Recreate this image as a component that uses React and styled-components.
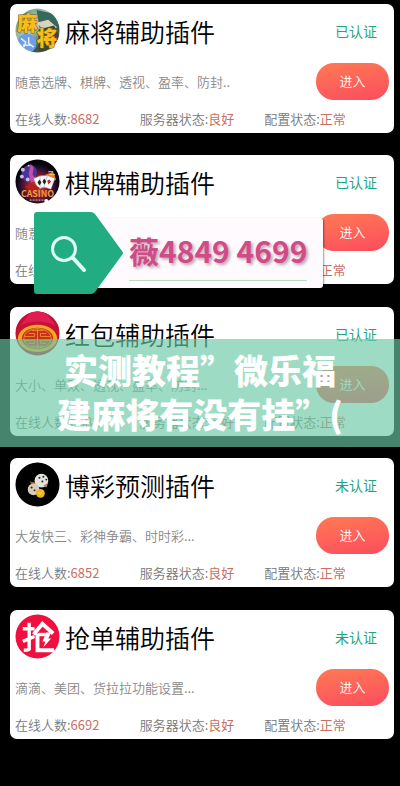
import React from 'react';
import styled, { createGlobalStyle } from 'styled-components';

const plugins = [
	{ name: '麻将辅助插件', icon: 'mahjong', verified: true, desc: '随意选牌、棋牌、透视、盈率、防封..', online: '8682' },
	{ name: '棋牌辅助插件', icon: 'casino', verified: true, desc: '随意选牌、棋牌、透视、盈率、防封..', online: '8682' },
	{ name: '红包辅助插件', icon: 'packet', verified: true, desc: '大小、单双、透视、盈率、防封...', online: '8682' },
	{ name: '博彩预测插件', icon: 'dice', verified: false, desc: '大发快三、彩神争霸、时时彩...', online: '6852' },
	{ name: '抢单辅助插件', icon: 'grab', verified: false, desc: '滴滴、美团、货拉拉功能设置...', online: '6692' },
];

function MahjongIcon(){
	return(
		<Icon viewBox="0 0 46 46" aria-hidden="true">
			<defs>
				<linearGradient id="sky" x1="0" y1="0" x2="1" y2="1">
					<stop offset="0" stopColor="#4d8c7e"/>
					<stop offset="0.45" stopColor="#b9c9b4"/>
					<stop offset="0.7" stopColor="#31594e"/>
					<stop offset="1" stopColor="#6f8b7c"/>
				</linearGradient>
				<clipPath id="mahjongClip"><circle cx="23" cy="23" r="22.5"/></clipPath>
			</defs>
			<g clipPath="url(#mahjongClip)">
				<rect width="46" height="46" fill="url(#sky)"/>
				<path d="M22 2 L40 6 L46 20 L35 15 L25 20 Z" fill="#36695c"/>
				<path d="M22 15 L34 12 L43 20 L30 23 Z" fill="#d9d2c2"/>
				<path d="M24 22 L40 18 L46 30 L40 46 L24 44 Z" fill="#3c4a33"/>
				<circle cx="12" cy="36" r="10" fill="#6f9fe0"/>
				<path d="M6 31 l5 4 l-2 5 M14 30 v6 l5 4 M8 38 h9" stroke="#e6eefc" strokeWidth="1.5" fill="none"/>
			</g>
			<GlyphText x="2" y="24">麻</GlyphText>
			<GlyphText x="22" y="39">将</GlyphText>
		</Icon>
	);
}

function CasinoIcon(){
	return(
		<Icon viewBox="0 0 46 46" aria-hidden="true">
			<defs>
				<radialGradient id="glow" cx="0.5" cy="0.6" r="0.5">
					<stop offset="0" stopColor="#e0441c"/>
					<stop offset="0.5" stopColor="#7c1c34"/>
					<stop offset="0.85" stopColor="#1c0c2a"/>
					<stop offset="1" stopColor="#050308"/>
				</radialGradient>
			</defs>
			<circle cx="23" cy="23" r="22.5" fill="url(#glow)"/>
			<path d="M8 10 Q16 2 21 9 T15 22 Q9 24 6 17 Z" fill="#4c3494"/>
			<path d="M16 5 l3 4 l-1 7 l5 6 l-7 2 l-2 -9 Z" fill="#c04fae"/>
			<g fill="#c9b9f2">
				<circle cx="8" cy="11" r="2"/>
				<circle cx="7" cy="18" r="2"/>
				<circle cx="13" cy="21" r="2"/>
				<circle cx="14" cy="7" r="1"/>
			</g>
			<path d="M31 16 l8 -3 l3 8 l-5 3 Z" fill="#ee7a2b"/>
			<path d="M34 13 h5 M35 16 h6" stroke="#ffd15a"/>
			<g fill="#fff" stroke="#9c8f99" strokeWidth="0.5">
				<rect x="21" y="18" width="8" height="12" rx="1" transform="rotate(-24 25 24)"/>
				<rect x="26" y="17" width="8" height="12" rx="1" transform="rotate(-4 30 23)"/>
				<rect x="31" y="18" width="8" height="12" rx="1" transform="rotate(20 35 24)"/>
			</g>
			<path d="M25 21 l2 3 l-2 3 l-2 -3 Z M30 20 l2 3 l-2 3 l-2 -3 Z" fill="#222"/>
			<path d="M35 21 l2 2 l-3 3 l-1 -4 Z" fill="#d22"/>
			<path d="M10 28 l8 -3 l8 5 l-9 4 Z" fill="#b3201e"/>
			<Casino x="23" y="39">CASINO</Casino>
			<path d="M15 42 h16" stroke="#e6c9a0" strokeDasharray="2 1"/>
			<circle cx="32" cy="43" r="2" fill="#fff"/>
		</Icon>
	);
}

function PacketIcon(){
	return(
		<Icon viewBox="0 0 46 46" aria-hidden="true">
			<defs>
				<clipPath id="packetClip"><circle cx="23" cy="23" r="22.5"/></clipPath>
			</defs>
			<g clipPath="url(#packetClip)">
				<rect width="46" height="46" fill="#c4182a"/>
				<path d="M0 0 H46 V20 Q23 4 0 20 Z" fill="#c40f3c"/>
				<path d="M5 15 L17 0 H30 L42 15 Q23 7 5 15 Z" fill="#e01c50"/>
				<ellipse cx="23" cy="28" rx="20" ry="14" fill="#f3a62b"/>
				<ellipse cx="23" cy="28" rx="16" ry="11" fill="#c8301c"/>
				<g stroke="#e88f2a" strokeWidth="1" fill="none">
					<ellipse cx="23" cy="28" rx="14" ry="10"/>
					<path d="M23 18 V38 M14 23 H20 V26 H10 M32 23 H26 V26 H36 M14 33 H20 V30 H10 M32 33 H26 V30 H36 M17 20 H29 M17 36 H29"/>
				</g>
			</g>
		</Icon>
	);
}

function DiceIcon(){
	return(
		<Icon viewBox="0 0 46 46" aria-hidden="true">
			<circle cx="23" cy="23" r="22.5" fill="#000"/>
			<path d="M15 20 l6 1 l3 4 l-5 1 Z" fill="#8c6a44"/>
			<circle cx="27" cy="19" r="7" fill="#e6e3dc"/>
			<circle cx="19" cy="28" r="6" fill="#d9cbb8"/>
			<path d="M29 24 l5 -3 l-2 5 Z" fill="#c08b5c"/>
			<g fill="#222">
				<circle cx="25" cy="16" r="1"/>
				<circle cx="29" cy="15" r="1"/>
				<circle cx="28" cy="20" r="1"/>
				<circle cx="32" cy="18" r="1"/>
				<circle cx="17" cy="26" r="1"/>
				<circle cx="20" cy="29" r="1"/>
			</g>
			<circle cx="26" cy="32" r="4.5" fill="#f2b51c"/>
			<path d="M24 31 l2 2 l2 -3" stroke="#fbe27a" fill="none"/>
		</Icon>
	);
}

function GrabIcon(){
	return(
		<Icon viewBox="0 0 46 46" aria-hidden="true">
			<circle cx="23" cy="23" r="22.5" fill="#f0103f"/>
			<g stroke="#fff" strokeWidth="3.5" fill="none">
				<path d="M8 15 H20 M14.5 9 V36 Q14 37 9 37 M8 28 L20 23"/>
				<path d="M19 21 L28 10 L39 20" strokeWidth="4"/>
				<path d="M23 20 V37 H40" strokeWidth="4"/>
				<path d="M24 21 H34"/>
			</g>
			<path d="M32 19 H37 L34 25 H37 L29 34 L31 28 H28 Z" fill="#fff"/>
		</Icon>
	);
}

const icons = {
	mahjong: MahjongIcon,
	casino: CasinoIcon,
	packet: PacketIcon,
	dice: DiceIcon,
	grab: GrabIcon,
};

function PluginCard({ plugin }){
	const PluginIcon = icons[plugin.icon];

	return(
		<Card>
			<Header>
				<PluginIcon/>
				<Name>{plugin.name}</Name>
				<Badge>{plugin.verified ? '已认证' : '未认证'}</Badge>
			</Header>
			<Body>
				<Desc>{plugin.desc}</Desc>
				<Enter type="button">进入</Enter>
			</Body>
			<Stats>
				<span>在线人数:<Value>{plugin.online}</Value></span>
				<span>服务器状态:<Value>良好</Value></span>
				<span>配置状态:<Value>正常</Value></span>
			</Stats>
		</Card>
	);
}

function App(){
	return(
		<Page lang="zh-CN">
			<GlobalStyle/>
			<List>
				{plugins.map(plugin => <PluginCard key={plugin.name} plugin={plugin}/>)}
			</List>
			<Contact>
				<Tag viewBox="0 0 90 82" aria-hidden="true">
					<path d="M3 0 H57 Q59 0 61 2 L88 39 Q90 41 88 43 L61 80 Q59 82 57 82 H3 Q0 82 0 79 V3 Q0 0 3 0 Z" fill="#22ac82"/>
					<g stroke="#e0fff5" strokeWidth="3" fill="none" strokeLinecap="round">
						<circle cx="30" cy="37" r="11.5"/>
						<path d="M39 46 L50 58" strokeWidth="4"/>
					</g>
				</Tag>
				<Phone>薇4849 4699</Phone>
			</Contact>
			<Banner>
				<BannerLine>实测教程”微乐福</BannerLine>
				<BannerLine>建麻将有没有挂”(</BannerLine>
			</Banner>
		</Page>
	);
}

const GlobalStyle = createGlobalStyle`
	body {
		margin: 0;
		background: #000;
		font-family: "Noto Sans CJK SC", sans-serif;
	}

	* {
		box-sizing: border-box;
	}
`;

const Page = styled.main`
	position: relative;
	min-height: 100vh;
	background: #000;
`;

const List = styled.div`
	padding: 4px 6px 4px 10px;
`;

const Card = styled.article`
	padding: 4px 5px 3px;
	margin-bottom: 22px;
	background: #fff;
	border-radius: 7px;

	&:nth-child(even){
		margin-bottom: 23px;
	}
`;

const Header = styled.div`
	display: flex;
	align-items: center;
	height: 45px;
`;

const Icon = styled.svg`
	flex: none;
	width: 45px;
	height: 45px;
`;

const GlyphText = styled.text`
	font-size: 21px;
	font-weight: 900;
	fill: #f9bd18;
	stroke: #7a560c;
	stroke-width: 1px;
	paint-order: stroke;
`;

const Casino = styled.text`
	font-size: 9px;
	font-weight: 700;
	text-anchor: middle;
	fill: #f09a3c;
`;

const Name = styled.h2`
	flex: 1;
	margin: 0 0 0 5px;
	font-size: 25px;
	line-height: 36px;
	font-weight: 350;
	color: #000;
	white-space: nowrap;
`;

const Badge = styled.span`
	margin-right: 12px;
	font-size: 14px;
	line-height: 20px;
	color: #1fa583;
`;

const Body = styled.div`
	display: flex;
	justify-content: space-between;
	align-items: center;
	margin-top: 10px;
	height: 37px;
`;

const Desc = styled.p`
	margin: 0;
	font-size: 13px;
	line-height: 20px;
	font-weight: 350;
	color: #888;
	white-space: nowrap;
`;

const Enter = styled.button`
	width: 73px;
	height: 37px;
	padding: 0 0 2px;
	border: 0;
	border-radius: 18px;
	background: linear-gradient(170deg, #ff7a54, #fc4c5e);
	color: #fff;
	font-family: inherit;
	font-size: 13px;
	font-weight: 350;
	cursor: pointer;
`;

const Stats = styled.div`
	display: grid;
	grid-template-columns: 1fr 1fr 1fr;
	margin-top: 8px;
	font-size: 13px;
	line-height: 22px;
	font-weight: 350;
	color: #777;
	white-space: nowrap;
`;

const Value = styled.span`
	font-weight: 400;
	color: #c96f64;
`;

const Contact = styled.aside`
	position: absolute;
	top: 212px;
	left: 34px;
	display: flex;
	align-items: center;
`;

const Tag = styled.svg`
	position: relative;
	z-index: 1;
	width: 90px;
	height: 82px;
`;

const Phone = styled.p`
	margin: 0 0 0 -30px;
	padding: 6px 16px 6px 35px;
	height: 70px;
	background: #fefafd;
	border-radius: 3px;
	box-shadow: 1px 1px 2px rgba(0, 0, 0, 0.4);
	color: #d24a86;
	font-size: 30px;
	line-height: 52px;
	font-weight: 700;
	text-shadow: 2px 2px 3px rgba(80, 40, 70, 0.4);
	white-space: nowrap;

	&::after {
		content: "";
		display: block;
		margin-top: 4px;
		border-bottom: 1px solid #b5dcc0;
	}
`;

const Banner = styled.h1`
	position: absolute;
	top: 339px;
	left: 0;
	right: 0;
	margin: 0;
	padding: 9px 0 11px;
	background: rgba(108, 201, 165, 0.66);
	color: #fff;
	font-size: 34px;
	line-height: 44px;
	font-weight: 900;
	text-align: center;
`;

const BannerLine = styled.span`
	display: block;
	white-space: nowrap;
`;

export default App;
